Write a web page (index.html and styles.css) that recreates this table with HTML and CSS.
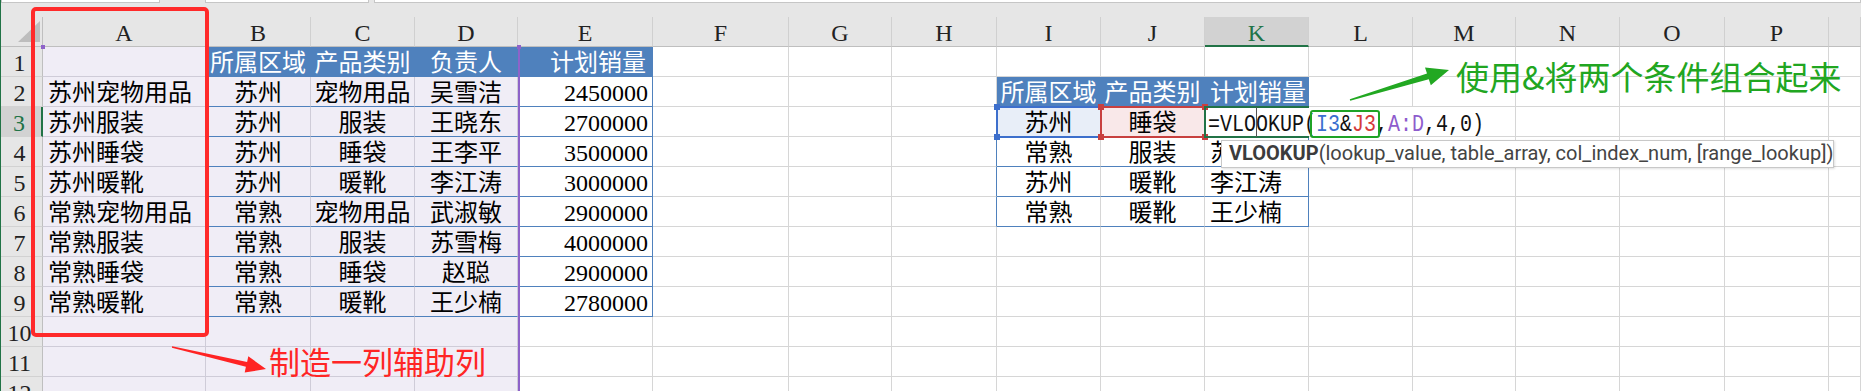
FILE: index.html
```html
<!DOCTYPE html>
<html lang="zh-CN">
<head>
<meta charset="utf-8">
<title>VLOOKUP 多条件查找</title>
<link rel="stylesheet" href="styles.css">
</head>
<body>
<div class="app">
  <div class="topbar"><span class="tb tb1"></span><span class="tb tb2"></span><span class="tb tb3"></span></div>
  <div class="sheet">
    <div class="corner"><span class="tri"></span></div>
    <div class="ch">A</div><div class="ch">B</div><div class="ch">C</div><div class="ch">D</div><div class="ch">E</div><div class="ch">F</div><div class="ch">G</div><div class="ch">H</div><div class="ch">I</div><div class="ch">J</div><div class="ch on">K</div><div class="ch">L</div><div class="ch">M</div><div class="ch">N</div><div class="ch">O</div><div class="ch">P</div><div class="ch"></div>

    <div class="rh">1</div>
    <div class="c p"></div>
    <div class="c hd ctr">所属区域</div><div class="c hd ctr">产品类别</div><div class="c hd ctr">负责人</div><div class="c hd rt">计划销量</div>
    <div class="c"></div><div class="c"></div><div class="c"></div><div class="c"></div><div class="c"></div><div class="c"></div><div class="c"></div><div class="c"></div><div class="c"></div><div class="c"></div><div class="c"></div><div class="c"></div>

    <div class="rh">2</div>
    <div class="c p">苏州宠物用品</div>
    <div class="c p ctr bb">苏州</div><div class="c p ctr bb">宠物用品</div><div class="c p ctr bb">吴雪洁</div><div class="c rt bb br">2450000</div>
    <div class="c"></div><div class="c"></div><div class="c"></div>
    <div class="c hd ctr">所属区域</div><div class="c hd ctr">产品类别</div><div class="c hd">计划销量</div>
    <div class="c"></div><div class="c"></div><div class="c"></div><div class="c"></div><div class="c"></div><div class="c"></div>

    <div class="rh on">3</div>
    <div class="c p">苏州服装</div>
    <div class="c p ctr bb">苏州</div><div class="c p ctr bb">服装</div><div class="c p ctr bb">王晓东</div><div class="c rt bb br">2700000</div>
    <div class="c"></div><div class="c"></div><div class="c br"></div>
    <div class="c ctr bb si">苏州</div><div class="c ctr bb sj">睡袋</div><div class="c bb br"></div>
    <div class="c"></div><div class="c"></div><div class="c"></div><div class="c"></div><div class="c"></div><div class="c"></div>

    <div class="rh">4</div>
    <div class="c p">苏州睡袋</div>
    <div class="c p ctr bb">苏州</div><div class="c p ctr bb">睡袋</div><div class="c p ctr bb">王李平</div><div class="c rt bb br">3500000</div>
    <div class="c"></div><div class="c"></div><div class="c br"></div>
    <div class="c ctr bb">常熟</div><div class="c ctr bb">服装</div><div class="c bb br">苏雪梅</div>
    <div class="c"></div><div class="c"></div><div class="c"></div><div class="c"></div><div class="c"></div><div class="c"></div>

    <div class="rh">5</div>
    <div class="c p">苏州暖靴</div>
    <div class="c p ctr bb">苏州</div><div class="c p ctr bb">暖靴</div><div class="c p ctr bb">李江涛</div><div class="c rt bb br">3000000</div>
    <div class="c"></div><div class="c"></div><div class="c br"></div>
    <div class="c ctr bb">苏州</div><div class="c ctr bb">暖靴</div><div class="c bb br">李江涛</div>
    <div class="c"></div><div class="c"></div><div class="c"></div><div class="c"></div><div class="c"></div><div class="c"></div>

    <div class="rh">6</div>
    <div class="c p">常熟宠物用品</div>
    <div class="c p ctr bb">常熟</div><div class="c p ctr bb">宠物用品</div><div class="c p ctr bb">武淑敏</div><div class="c rt bb br">2900000</div>
    <div class="c"></div><div class="c"></div><div class="c br"></div>
    <div class="c ctr bb">常熟</div><div class="c ctr bb">暖靴</div><div class="c bb br">王少楠</div>
    <div class="c"></div><div class="c"></div><div class="c"></div><div class="c"></div><div class="c"></div><div class="c"></div>

    <div class="rh">7</div>
    <div class="c p">常熟服装</div>
    <div class="c p ctr bb">常熟</div><div class="c p ctr bb">服装</div><div class="c p ctr bb">苏雪梅</div><div class="c rt bb br">4000000</div>
    <div class="c"></div><div class="c"></div><div class="c"></div><div class="c"></div><div class="c"></div><div class="c"></div><div class="c"></div><div class="c"></div><div class="c"></div><div class="c"></div><div class="c"></div><div class="c"></div>

    <div class="rh">8</div>
    <div class="c p">常熟睡袋</div>
    <div class="c p ctr bb">常熟</div><div class="c p ctr bb">睡袋</div><div class="c p ctr bb">赵聪</div><div class="c rt bb br">2900000</div>
    <div class="c"></div><div class="c"></div><div class="c"></div><div class="c"></div><div class="c"></div><div class="c"></div><div class="c"></div><div class="c"></div><div class="c"></div><div class="c"></div><div class="c"></div><div class="c"></div>

    <div class="rh">9</div>
    <div class="c p">常熟暖靴</div>
    <div class="c p ctr bb">常熟</div><div class="c p ctr bb">暖靴</div><div class="c p ctr bb">王少楠</div><div class="c rt bb br">2780000</div>
    <div class="c"></div><div class="c"></div><div class="c"></div><div class="c"></div><div class="c"></div><div class="c"></div><div class="c"></div><div class="c"></div><div class="c"></div><div class="c"></div><div class="c"></div><div class="c"></div>

    <div class="rh">10</div>
    <div class="c p"></div><div class="c p"></div><div class="c p"></div><div class="c p"></div>
    <div class="c"></div><div class="c"></div><div class="c"></div><div class="c"></div><div class="c"></div><div class="c"></div><div class="c"></div><div class="c"></div><div class="c"></div><div class="c"></div><div class="c"></div><div class="c"></div><div class="c"></div>

    <div class="rh">11</div>
    <div class="c p"></div><div class="c p"></div><div class="c p"></div><div class="c p"></div>
    <div class="c"></div><div class="c"></div><div class="c"></div><div class="c"></div><div class="c"></div><div class="c"></div><div class="c"></div><div class="c"></div><div class="c"></div><div class="c"></div><div class="c"></div><div class="c"></div><div class="c"></div>

    <div class="rh">12</div>
    <div class="c p"></div><div class="c p"></div><div class="c p"></div><div class="c p"></div>
    <div class="c"></div><div class="c"></div><div class="c"></div><div class="c"></div><div class="c"></div><div class="c"></div><div class="c"></div><div class="c"></div><div class="c"></div><div class="c"></div><div class="c"></div><div class="c"></div><div class="c"></div>
  </div>
</div>

<!-- overlays -->
<div class="range"><span class="hdl hdl-tl"></span><span class="hdl hdl-tr"></span></div>
<div class="sel sel-i"><span class="h h-tl"></span><span class="h h-tr"></span><span class="h h-bl"></span><span class="h h-br"></span></div>
<div class="sel sel-j"><span class="h h-tl"></span><span class="h h-tr"></span><span class="h h-bl"></span><span class="h h-br"></span></div>
<div class="editbg"></div>
<div class="edit"></div>
<div class="formula"><span class="fx">=VLOOKUP(<span class="fb">I3</span>&amp;<span class="fr">J3</span>,<span class="fp">A:D</span>,4,0)</span></div>
<div class="cursor"></div>
<div class="gbox"></div>
<div class="tip"><b>VLOOKUP</b>(lookup_value, table_array, col_index_num, [range_lookup])</div>

<div class="redbox"></div>
<svg class="arrows" width="1861" height="391" viewBox="0 0 1861 391">
  <polygon fill="#ff2323" points="172.1,346.3 247.1,362 248.3,356.3 266,369 244.7,372.5 245.9,366.8 171.9,347.7"/>
  <polygon fill="#22a822" points="1350.2,100.8 1428.8,79.3 1430.8,85.3 1449,70 1425,67.5 1427,73.5 1349.8,99.2"/>
</svg>
<div class="note note-red">制造一列辅助列</div>
<div class="note note-green">使用&amp;将两个条件组合起来</div>
</body>
</html>
```

FILE: styles.css
```css
* { box-sizing: border-box; margin: 0; padding: 0; }
html, body { width: 1861px; height: 391px; overflow: hidden; background: #fff; }
body {
  font-family: "Liberation Serif", "Noto Sans CJK SC", serif;
  font-size: 24px;
  color: #000;
}

.app {
  width: 1861px;
  height: 391px;
  border-left: 1px solid #217346;
  overflow: hidden;
  background: #fff;
}

/* formula bar bottom edges */
.topbar {
  height: 17px;
  background: #e6e6e6;
  display: flex;
  align-items: flex-start;
}
.tb {
  height: 3px;
  background: #fff;
  border: 1px solid #c6c6c6;
  border-top: none;
}
.tb1 { width: 159px; }
.tb2 { width: 164px; margin-left: 45px; }
.tb3 { flex: 1; margin-left: 5px; }

/* sheet grid */
.sheet {
  display: grid;
  grid-template-columns: 42px 163px 105px 104px 103px 135px 136px 103px 105px 104px 104px 104px 104px 103px 104px 105px 104px 1fr;
  grid-auto-rows: 30px;
}

.corner {
  background: #e6e6e6;
  border-right: 1px solid #bfbfbf;
  border-bottom: 1px solid #bfbfbf;
  display: flex;
  align-items: flex-end;
  justify-content: flex-end;
  padding: 0 2px 4px 0;
}
.tri {
  width: 22px;
  height: 21px;
  background: #bdbdbd;
  clip-path: polygon(100% 0, 100% 100%, 0 100%);
}

.ch {
  background: #e6e6e6;
  border-right: 1px solid #d0d0d0;
  border-bottom: 1px solid #bfbfbf;
  text-align: center;
  color: #222;
  line-height: 28px;
  padding-top: 2px;
}
.ch.on {
  background: #d2d2d2;
  color: #217346;
  border-bottom: 2px solid #217346;
}

.rh {
  background: #e6e6e6;
  border-right: 1px solid #bfbfbf;
  border-bottom: 1px solid #d2d2d2;
  text-align: center;
  color: #222;
  line-height: 28px;
  padding: 2px 4px 0 0;
}
.rh.on {
  background: #d2d2d2;
  color: #217346;
  border-right: 2px solid #217346;
}

.c {
  border-right: 1px solid #d6d6d6;
  border-bottom: 1px solid #d6d6d6;
  padding: 2px 0 0 5px;
  line-height: 28px;
  white-space: nowrap;
}
.p { background: #f0edf6; border-color: #cfccd8; }
.ctr { text-align: center; padding-left: 0; }
.rt { text-align: right; padding-left: 0; padding-right: 4px; }
.hd { background: #4f81bd; color: #fff; border-color: #4f81bd; }
.hd.rt { padding-right: 6px; }
.bb { border-bottom-color: #4f81bd; }
.br { border-right-color: #4f81bd; }
.si { background: #e8eef8; }
.sj { background: #f9e8e9; }

/* A:D range highlight */
.range {
  position: absolute;
  left: 43px;
  top: 47px;
  width: 477px;
  height: 360px;
  border-right: 2px solid #8e63c9;
}
.hdl {
  position: absolute;
  width: 4px;
  height: 4px;
  background: #8e63c9;
  top: -2px;
}
.hdl-tl { left: -2px; }
.hdl-tr { right: -3px; }

/* referenced cells */
.sel {
  position: absolute;
  top: 106px;
  width: 106px;
  height: 32px;
  border: 2px solid;
}
.sel-i { left: 996px; border-color: #3d6fcc; }
.sel-j { left: 1100px; border-color: #c8403f; }
.h {
  position: absolute;
  width: 6px;
  height: 6px;
}
.sel-i .h { background: #3d6fcc; }
.sel-j .h { background: #c8403f; }
.h-tl { left: -4px; top: -4px; }
.h-tr { right: -4px; top: -4px; }
.h-bl { left: -4px; bottom: -4px; }
.h-br { right: -4px; bottom: -4px; }

/* edited cell */
.editbg {
  position: absolute;
  left: 1306px;
  top: 107px;
  width: 208px;
  height: 29px;
  background: #fff;
}
.edit {
  position: absolute;
  left: 1204px;
  top: 106px;
  width: 105px;
  height: 32px;
  border: 2px solid #217346;
  border-right: none;
}
.formula {
  position: absolute;
  left: 1208px;
  top: 108px;
  line-height: 30px;
  white-space: nowrap;
}
.fx {
  display: inline-block;
  font-family: "Liberation Mono", monospace;
  font-size: 24px;
  transform: scaleX(0.8333);
  transform-origin: left center;
  color: #111;
}
.fb { color: #3b6fd0; }
.fr { color: #d43a3a; }
.fp { color: #8e5ccd; }
.cursor {
  position: absolute;
  left: 1256px;
  top: 107px;
  width: 1px;
  height: 30px;
  background: #555;
}
.gbox {
  position: absolute;
  left: 1310px;
  top: 110px;
  width: 70px;
  height: 28px;
  border: 2px solid #1fa326;
  border-radius: 3px;
}

/* function tooltip */
.tip {
  position: absolute;
  left: 1221px;
  top: 140px;
  width: 613px;
  height: 28px;
  background: #fff;
  border: 1px solid #c8c8c8;
  box-shadow: 1px 1px 2px rgba(0,0,0,0.12);
  font-family: "Roboto", "Liberation Sans", sans-serif;
  font-size: 20px;
  line-height: 25px;
  color: #444;
  padding-left: 7px;
  white-space: nowrap;
}
.tip b { font-weight: 700; color: #3c3c3c; }

/* annotations */
.redbox {
  position: absolute;
  left: 31px;
  top: 7px;
  width: 178px;
  height: 330px;
  border: 4px solid #ff2a2a;
  border-radius: 5px;
}
.arrows {
  position: absolute;
  left: 0;
  top: 0;
}
.note {
  position: absolute;
  font-family: "Noto Sans CJK SC", sans-serif;
  line-height: 1;
  white-space: nowrap;
}
.note-red {
  left: 269px;
  top: 345px;
  font-size: 31px;
  color: #ff2525;
}
.note-green {
  left: 1456px;
  top: 60px;
  font-size: 33px;
  color: #21a621;
}
```
